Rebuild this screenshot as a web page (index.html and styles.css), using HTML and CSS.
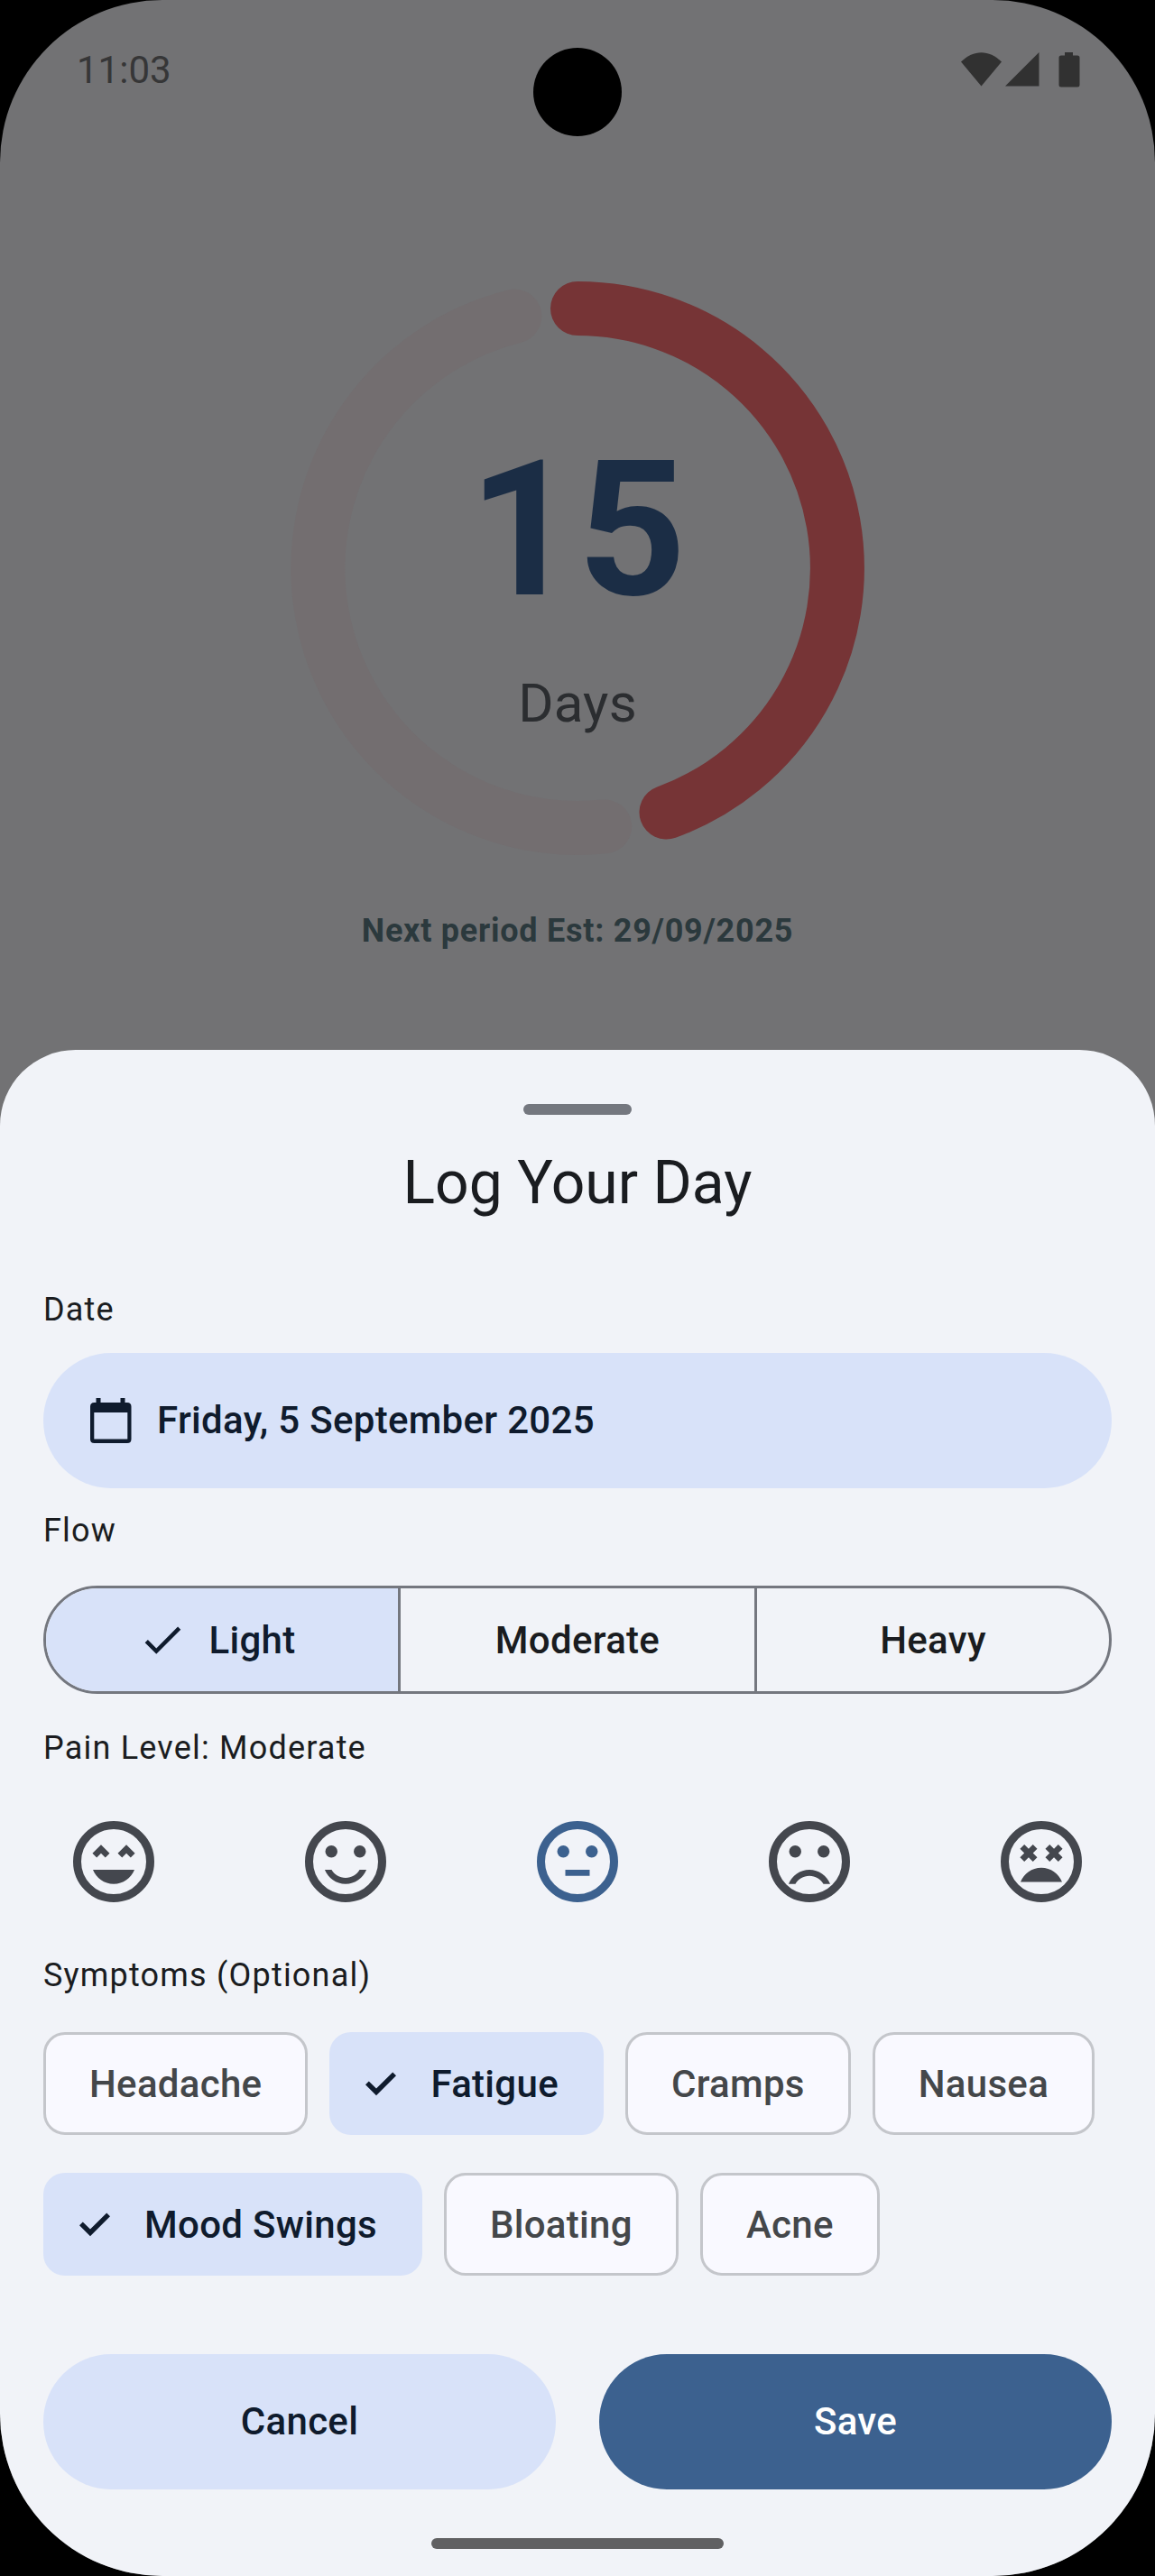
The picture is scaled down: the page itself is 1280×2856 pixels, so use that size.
FILE: index.html
```html
<!DOCTYPE html>
<html lang="en">
<head>
<meta charset="utf-8">
<title>Log Your Day</title>
<link rel="stylesheet" href="styles.css">
</head>
<body>
<svg class="defs" width="0" height="0" aria-hidden="true">
  <symbol id="check" viewBox="0 0 24 24"><path d="M9 16.17 4.83 12l-1.42 1.41L9 19 21 7l-1.41-1.41z"/></symbol>
  <symbol id="chip-check" viewBox="0 0 24 24"><path d="m3.500 12.600 1.900-1.900 4.100 4.100 9.100-9.100 1.900 1.900-11 11z"/></symbol>
</svg>
<div class="phone">
  <header class="status">
    <span class="time">11:03</span>
    <span class="camera"></span>
    <svg class="signals" viewBox="0 0 132 40">
      <path d="M0 10.500C14-3.300 31-3.300 45 10.500L22.500 37.500z"/>
      <path d="M49 37.500 86.500 0v37.500z"/>
      <path d="M108 3.500h7V0h9v3.500h5q2.500 0 2.500 2.500v30q0 2.500-2.500 2.500h-18q-2.500 0-2.500-2.500V6q0-2.500 2.500-2.500z"/>
    </svg>
  </header>
  <section class="cycle">
    <div class="dial">
      <svg class="ring" viewBox="-318 -318 636 636">
        <path class="track" d="M30.100 286.400A288 288 0 0 1-69.700-279.400"/>
        <path class="progress" d="M0-288A288 288 0 0 1 98.500 270.600"/>
      </svg>
      <span class="count">15</span>
      <span class="unit">Days</span>
    </div>
    <p class="next">Next period Est: 29/09/2025</p>
  </section>
  <main class="sheet">
    <div class="handle"></div>
    <h1 class="title">Log Your Day</h1>
    <p class="label label-date">Date</p>
    <button class="btn date">
      <svg class="calendar" viewBox="0 0 46 50"><path fill-rule="evenodd" d="M6.500 0h5v5h22V0h5v5H41q4.500 0 4.500 4.500v36q0 4.500-4.500 4.500H4.500Q0 50 0 45.500v-36Q0 5 4.500 5h2zM4.300 16v29.500h37V16z"/></svg>
      <span>Friday, 5 September 2025</span>
    </button>
    <p class="label label-flow">Flow</p>
    <div class="segments">
      <div class="segment on"><svg class="tick"><use href="#check"/></svg><span>Light</span></div>
      <div class="segment">Moderate</div>
      <div class="segment">Heavy</div>
    </div>
    <p class="label label-pain">Pain Level: Moderate</p>
    <div class="faces">
      <svg class="face" viewBox="0 0 24 24"><circle class="outline" cx="12" cy="12" r="9"/><path d="M7.820 11l1.060-1.060L9.940 11 11 9.940 8.880 7.820 6.760 9.940zM13 9.940L14.060 11l1.060-1.060L16.180 11l1.060-1.060-2.120-2.120zM12 17.500c2.330 0 4.310-1.460 5.110-3.500H6.890c.8 2.040 2.780 3.500 5.110 3.500z"/></svg>
      <svg class="face" viewBox="0 0 24 24"><circle class="outline" cx="12" cy="12" r="9"/><circle cx="8.500" cy="9.500" r="1.500"/><circle cx="15.500" cy="9.500" r="1.500"/><path d="M12 16c-1.480 0-2.750-.81-3.450-2H6.880c.8 2.050 2.790 3.500 5.120 3.500s4.320-1.450 5.120-3.500h-1.670c-.7 1.190-1.970 2-3.450 2z"/></svg>
      <svg class="face on" viewBox="0 0 24 24"><circle class="outline" cx="12" cy="12" r="9"/><circle cx="8.500" cy="9.500" r="1.500"/><circle cx="15.500" cy="9.500" r="1.500"/><path d="M9 14h6v1.500H9z"/></svg>
      <svg class="face" viewBox="0 0 24 24"><circle class="outline" cx="12" cy="12" r="9"/><circle cx="8.500" cy="9.500" r="1.500"/><circle cx="15.500" cy="9.500" r="1.500"/><path d="M12 14c-2.330 0-4.320 1.450-5.120 3.500h1.670c.69-1.190 1.970-2 3.450-2s2.750.81 3.450 2h1.670c-.8-2.050-2.790-3.500-5.120-3.500z"/></svg>
      <svg class="face" viewBox="0 0 24 24"><circle class="outline" cx="12" cy="12" r="9"/><path d="M7.820 12l1.060-1.060L9.940 12 11 10.940 9.940 9.880 11 8.820 9.940 7.760 8.880 8.820 7.820 7.760 6.760 8.820 7.820 9.880 6.760 10.940zM16.180 7.760 15.120 8.820 14.060 7.760 13 8.820 14.060 9.880 13 10.940 14.060 12 15.120 10.940 16.180 12 17.240 10.940 16.180 9.880 17.240 8.820zM12 13.500c-2.330 0-4.310 1.460-5.110 3.500h10.220c-.8-2.040-2.780-3.500-5.110-3.500z"/></svg>
    </div>
    <p class="label label-symptoms">Symptoms (Optional)</p>
    <div class="chips">
      <span class="chip">Headache</span>
      <span class="chip on"><svg class="tick"><use href="#chip-check"/></svg>Fatigue</span>
      <span class="chip">Cramps</span>
      <span class="chip">Nausea</span>
      <span class="chip on"><svg class="tick"><use href="#chip-check"/></svg>Mood Swings</span>
      <span class="chip">Bloating</span>
      <span class="chip">Acne</span>
    </div>
    <div class="actions">
      <button class="btn cancel">Cancel</button>
      <button class="btn save">Save</button>
    </div>
    <div class="home"></div>
  </main>
</div>
</body>
</html>
```

FILE: styles.css
```css
* { box-sizing: border-box; }
body { margin: 0; background: #000; font-family: Roboto, "Liberation Sans", sans-serif; color: #1a1c20; }
.defs { display: block; }
.phone { width: 1280px; height: 2856px; display: flex; flex-direction: column; background: #727274; border-radius: 180px; overflow: hidden; }
.status { height: 312px; padding: 53px 83px 0; display: grid; grid-template-columns: 1fr 98px 1fr; align-items: start; flex: none; }
.time { padding-left: 2px; font-size: 42px; line-height: 50px; color: #363637; }
.camera { width: 98px; height: 98px; border-radius: 50%; background: #000; }
.signals { width: 132px; height: 40px; margin-top: 5px; justify-self: end; fill: #313131; }
.cycle { height: 852px; flex: none; display: flex; flex-direction: column; align-items: center; }
.dial { width: 636px; height: 636px; display: grid; grid-template-rows: 199px 188px 80px; justify-items: center; align-content: start; }
.ring { grid-area: 1 / 1 / 4 / 2; width: 636px; height: 636px; fill: none; stroke-width: 60px; stroke-linecap: round; }
.track { stroke: #736e70; }
.progress { stroke: #763436; }
.count { grid-area: 1 / 1 / 3 / 2; align-self: end; font-size: 210px; font-weight: 700; line-height: 224px; color: #1b2d45; }
.unit { grid-area: 3 / 1; font-size: 60px; line-height: 162px; color: #2b2d30; letter-spacing: .200px; }
.next { margin: 60px 0 0; font-size: 36px; line-height: 48px; font-weight: 700; color: #2b393d; letter-spacing: .750px; }
.sheet { height: 1692px; flex: none; background: #f1f3f8; border-radius: 84px 84px 0 0; padding: 60px 48px 0; display: flex; flex-direction: column; }
.handle { width: 120px; height: 12px; border-radius: 6px; background: #74777f; align-self: center; }
.title { margin: 34px 0 0; height: 84px; line-height: 84px; font-size: 66px; font-weight: 400; text-align: center; }
.label { margin: 0; font-size: 36px; line-height: 48px; letter-spacing: 1.200px; }
.label-date { margin-top: 74px; }
.btn { border: 0; margin: 0; height: 150px; border-radius: 75px; font: 500 42px/60px Roboto, sans-serif; letter-spacing: .300px; background: #d8e2f9; color: #0f1b2d; }
.date { margin-top: 24px; padding: 0 52px; display: flex; align-items: center; gap: 28px; }
.calendar { width: 46px; height: 50px; fill: currentColor; }
.label-flow { margin-top: 23px; }
.segments { margin-top: 37px; height: 120px; border: 3px solid #74777f; border-radius: 60px; display: grid; grid-template-columns: 393px 395px 1fr; overflow: hidden; font-size: 42px; font-weight: 500; letter-spacing: .300px; }
.segment { display: flex; align-items: center; justify-content: center; border-right: 3px solid #74777f; }
.segment:last-child { border-right: 0; }
.segment.on { background: #d8e2f9; color: #0f1b2d; gap: 24px; padding-right: 11px; }
.tick { width: 54px; height: 54px; fill: currentColor; }
.label-pain { margin-top: 36px; }
.faces { margin: 48px 24px 0; display: flex; justify-content: space-between; }
.face { width: 108px; height: 108px; fill: #44474e; stroke: #44474e; stroke-width: 0; }
.face .outline { fill: none; stroke-width: 2; }
.face.on { fill: #3c618f; stroke: #3c618f; }
.label-symptoms { margin-top: 48px; }
.chips { margin-top: 39px; display: flex; flex-wrap: wrap; gap: 42px 24px; }
.chip { height: 114px; padding: 0 48px; border: 3px solid #c4c6cb; border-radius: 24px; background: #f9f9ff; color: #44474a; font-size: 42px; font-weight: 500; letter-spacing: .300px; display: flex; align-items: center; gap: 31px; }
.chip.on { border: 0; padding: 0 50px 0 33px; background: #d8e2f9; color: #0f1b2d; }
.chip .tick { width: 48px; height: 48px; }
.actions { margin-top: 87px; display: grid; grid-template-columns: 1fr 1fr; gap: 48px; }
.save { background: #3c618f; color: #fff; }
.home { width: 324px; height: 12px; border-radius: 6px; background: #606062; align-self: center; margin-top: 54px; }
```
